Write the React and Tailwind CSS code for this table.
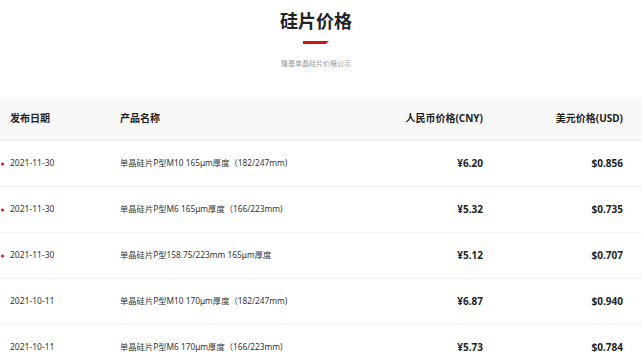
import React from 'react';

const rows = [
  { date: '2021-11-30', name: '单晶硅片P型M10 165μm厚度（182/247mm)', cny: '¥6.20', usd: '$0.856', isNew: true },
  { date: '2021-11-30', name: '单晶硅片P型M6 165μm厚度（166/223mm)', cny: '¥5.32', usd: '$0.735', isNew: true },
  { date: '2021-11-30', name: '单晶硅片P型158.75/223mm 165μm厚度', cny: '¥5.12', usd: '$0.707', isNew: true },
  { date: '2021-10-11', name: '单晶硅片P型M10 170μm厚度（182/247mm)', cny: '¥6.87', usd: '$0.940', isNew: false },
  { date: '2021-10-11', name: '单晶硅片P型M6 170μm厚度（166/223mm)', cny: '¥5.73', usd: '$0.784', isNew: false },
];

const font = { fontFamily: '"Noto Sans", "Noto Sans CJK SC", sans-serif' };

export default function App() {
  return (
    <div className="w-[642px] h-[352px] overflow-hidden bg-white text-[#333]" style={font}>
      <div className="flex flex-col items-center pr-[10px]">
        <h1 className="pt-[12px] text-[18px] leading-[18px] font-bold text-[#222]">硅片价格</h1>
        <div className="mt-[11px] w-[26px] h-[3px] bg-[#d4101c] [clip-path:polygon(0_0,100%_0,88%_100%,0_100%)]" />
        <p className="mt-[15px] text-[7px] leading-[10px] text-[#9a9a9a]">隆基单晶硅片价格公示</p>
      </div>

      <div className="mt-[28px]">
        <div className="grid grid-cols-[110px_1fr_120px_159px] h-[44px] items-center bg-[#f8f8f8] border-b border-[#efefef] text-[10px] font-bold text-[#222]">
          <div className="pl-[10px]">发布日期</div>
          <div className="pl-[10px]">产品名称</div>
          <div className="text-right">人民币价格(CNY)</div>
          <div className="text-right pr-[19px]">美元价格(USD)</div>
        </div>

        {rows.map((r, i) => (
          <div
            key={i}
            className="grid grid-cols-[110px_1fr_120px_159px] h-[46px] items-center border-b border-[#f0f0f0] bg-white"
          >
            <div className="relative pl-[10px] text-[8.5px] text-[#333]">
              {r.isNew && (
                <span className="absolute left-[1px] top-1/2 -translate-y-1/2 w-[3px] h-[3px] rounded-full bg-[#d4101c]" />
              )}
              {r.date}
            </div>
            <div className="pl-[10px] text-[8.3px] text-[#333]">{r.name}</div>
            <div className="text-right text-[10px] font-bold text-[#222]">{r.cny}</div>
            <div className="text-right pr-[19px] text-[10px] font-bold text-[#222]">{r.usd}</div>
          </div>
        ))}
      </div>
    </div>
  );
}
